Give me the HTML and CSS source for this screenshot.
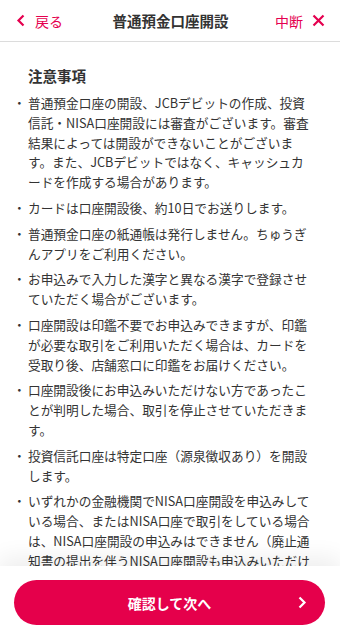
FILE: index.html
```html
<!DOCTYPE html>
<html lang="ja">
<head>
  <meta charset="UTF-8" />
  <meta name="viewport" content="width=device-width, initial-scale=1.0"/>
  <title>普通預金口座開設</title>
  <link rel="stylesheet" href="styles.css">
</head>
<body>

  <div class="header">
    <a class="nav-back" href="#">
      <svg class="icon" width="10" height="13" viewBox="0 0 10 13"><path d="M7.5 1.5 L2.5 6.5 L7.5 11.5" fill="none" stroke="#e5004f" stroke-width="2.2"/></svg>
      <span>戻る</span>
    </a>
    <div class="header-title">普通預金口座開設</div>
    <a class="nav-quit" href="#">
      <span>中断</span>
      <svg class="icon" width="13" height="13" viewBox="0 0 13 13"><path d="M1.5 1.5 L11.5 11.5 M11.5 1.5 L1.5 11.5" fill="none" stroke="#e5004f" stroke-width="2.2"/></svg>
    </a>
  </div>

  <div class="main-content">
    <div class="section-title">注意事項</div>
    <ul class="notes">
      <li><span class="dot">・</span><span>普通預金口座の開設、JCBデビットの作成、投資信託・NISA口座開設には審査がございます。審査結果によっては開設ができないことがございます。また、JCBデビットではなく、キャッシュカードを作成する場合があります。</span></li>
      <li><span class="dot">・</span><span>カードは口座開設後、約10日でお送りします。</span></li>
      <li><span class="dot">・</span><span>普通預金口座の紙通帳は発行しません。ちゅうぎんアプリをご利用ください。</span></li>
      <li><span class="dot">・</span><span>お申込みで入力した漢字と異なる漢字で登録させていただく場合がございます。</span></li>
      <li><span class="dot">・</span><span>口座開設は印鑑不要でお申込みできますが、印鑑が必要な取引をご利用いただく場合は、カードを受取り後、店舗窓口に印鑑をお届けください。</span></li>
      <li><span class="dot">・</span><span>口座開設後にお申込みいただけない方であったことが判明した場合、取引を停止させていただきます。</span></li>
      <li><span class="dot">・</span><span>投資信託口座は特定口座（源泉徴収あり）を開設します。</span></li>
      <li><span class="dot">・</span><span>いずれかの金融機関でNISA口座開設を申込みしている場合、またはNISA口座で取引をしている場合は、NISA口座開設の申込みはできません（廃止通知書の提出を伴うNISA口座開設も申込みいただけません）。</span></li>
    </ul>
  </div>

  <div class="footer">
    <button class="btn-next">
      <span>確認して次へ</span>
      <svg class="btn-arrow" width="10" height="13" viewBox="0 0 10 13"><path d="M2.5 1.5 L7.5 6.5 L2.5 11.5" fill="none" stroke="#fff" stroke-width="2.2"/></svg>
    </button>
  </div>

</body>
</html>
```

FILE: styles.css
```css
html, body {
  margin: 0;
  padding: 0;
  height: 100%;
}
body {
  font-family: "Noto Sans CJK JP", "Liberation Sans", sans-serif;
  color: #333;
  background: #fff;
  display: flex;
  flex-direction: column;
  overflow: hidden;
}
.header {
  height: 41px;
  flex: none;
  display: grid;
  grid-template-columns: 1fr auto 1fr;
  align-items: center;
  border-bottom: 1px solid #dcdcdc;
  padding: 0 15px 0 16px;
}
.header a {
  color: #e5004f;
  text-decoration: none;
  font-size: 14px;
  display: flex;
  align-items: center;
}
.nav-back {
  gap: 9px;
}
.nav-quit {
  justify-self: end;
  gap: 9px;
}
.icon {
  display: block;
}
.header-title {
  font-size: 14.5px;
  font-weight: bold;
  color: #333;
}
.main-content {
  flex: 1;
  overflow: hidden;
  padding: 24px 26px 0 13px;
}
.section-title {
  font-size: 14.5px;
  font-weight: bold;
  line-height: 20px;
  padding-left: 15px;
  margin-bottom: 7px;
}
.notes {
  list-style: none;
  margin: 0;
  padding: 0;
  font-size: 12.7px;
  line-height: 19.8px;
}
.notes li {
  display: flex;
  margin-bottom: 6px;
}
.dot {
  flex: none;
  width: 15px;
}
.footer {
  flex: none;
  padding: 14px 15px 15px 14px;
  background: #fff;
  box-shadow: 0 -8px 22px rgba(0, 0, 0, 0.07);
  position: relative;
}
.btn-next {
  width: 100%;
  height: 45px;
  border: none;
  border-radius: 23px;
  background: #e5004b;
  color: #fff;
  font-family: inherit;
  font-size: 14px;
  font-weight: bold;
  display: flex;
  align-items: center;
  justify-content: center;
  position: relative;
  cursor: pointer;
}
.btn-arrow {
  position: absolute;
  right: 18px;
  top: 16px;
}
```
